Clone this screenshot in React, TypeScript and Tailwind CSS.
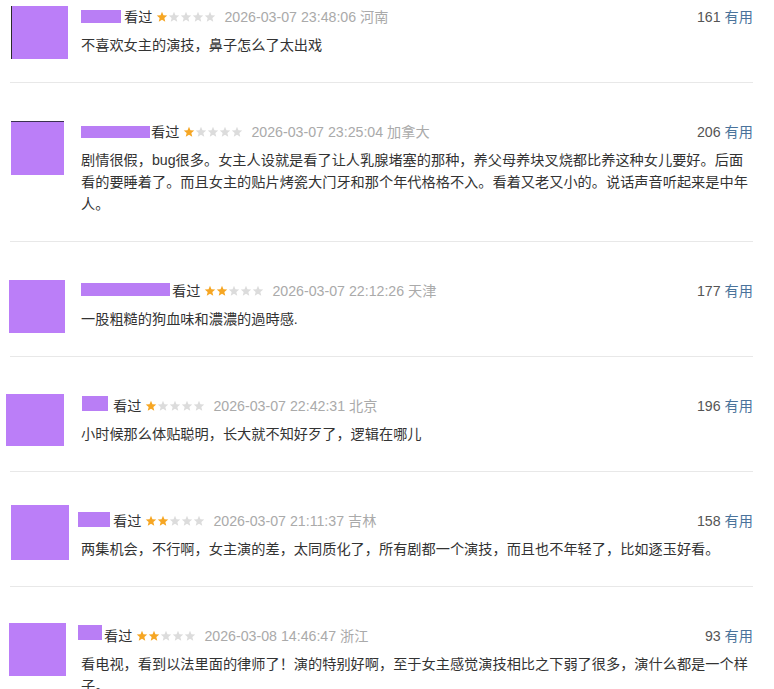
const reviews = [
  {
    avatar: "ml-[1px] mt-0 w-[57px] h-[53px] border-l border-[#2a2a2a]",
    name: "w-[40px] h-[13px] mt-[4px] mr-[3px]",
    stars: 1,
    date: "2026-03-07 23:48:06",
    region: "河南",
    votes: 161,
    text: "不喜欢女主的演技，鼻子怎么了太出戏",
  },
  {
    avatar: "ml-[1px] mt-0 w-[53px] h-[54px] border-t border-[#3a3050]",
    name: "w-[69px] h-[12px] mt-[5px] mr-[1px]",
    stars: 1,
    date: "2026-03-07 23:25:04",
    region: "加拿大",
    votes: 206,
    text: "剧情很假，bug很多。女主人设就是看了让人乳腺堵塞的那种，养父母养块叉烧都比养这种女儿要好。后面看的要睡着了。而且女主的贴片烤瓷大门牙和那个年代格格不入。看着又老又小的。说话声音听起来是中年人。",
  },
  {
    avatar: "ml-[-1px] mt-0 w-[56px] h-[53px]",
    name: "w-[89px] h-[13px] mt-[3px] mr-[2px]",
    stars: 2,
    date: "2026-03-07 22:12:26",
    region: "天津",
    votes: 177,
    text: "一股粗糙的狗血味和濃濃的過時感.",
  },
  {
    avatar: "ml-[-4px] mt-[-1px] w-[58px] h-[52px]",
    name: "w-[26px] h-[15px] mt-[1px] mr-[5px] ml-[1px]",
    stars: 1,
    date: "2026-03-07 22:42:31",
    region: "北京",
    votes: 196,
    text: "小时候那么体贴聪明，长大就不知好歹了，逻辑在哪儿",
  },
  {
    avatar: "ml-[1px] mt-[-5px] w-[58px] h-[55px]",
    name: "w-[32px] h-[15px] mt-[2px] mr-[3px] ml-[-3px]",
    stars: 2,
    date: "2026-03-07 21:11:37",
    region: "吉林",
    votes: 158,
    text: "两集机会，不行啊，女主演的差，太同质化了，所有剧都一个演技，而且也不年轻了，比如逐玉好看。",
  },
  {
    avatar: "ml-[-1px] mt-[-2px] w-[57px] h-[53px]",
    name: "w-[24px] h-[15px] mt-0 mr-[2px] ml-[-3px]",
    stars: 2,
    date: "2026-03-08 14:46:47",
    region: "浙江",
    votes: 93,
    text: "看电视，看到以法里面的律师了！演的特别好啊，至于女主感觉演技相比之下弱了很多，演什么都是一个样子。",
  },
];

function Stars({ count }: { count: number }) {
  return (
    <span className="flex items-center mx-[4px]">
      {[0, 1, 2, 3, 4].map(i => (
        <svg key={i} width="12" height="12" viewBox="0 0 24 24" className="shrink-0">
          <polygon
            points="12,1.5 14.9,8.6 22.5,9.2 16.7,14.1 18.5,21.6 12,17.6 5.5,21.6 7.3,14.1 1.5,9.2 9.1,8.6"
            fill={i < count ? "#f6a623" : "#dcdcdc"}
          />
        </svg>
      ))}
    </span>
  );
}

export default function App() {
  return (
    <div className="w-[774px] h-[689px] overflow-hidden bg-white pt-[6px] pl-[10px] pr-[21px] font-['Liberation_Sans','Noto_Sans_CJK_SC',sans-serif] text-[14.2px] text-[#333]">
      {reviews.map((r, idx) => (
        <div key={idx} className={idx > 0 ? "pt-[38px] border-b border-[#e8e8e8]" : "border-b border-[#e8e8e8]"}>
          <div className="flex items-start">
            <div className="w-[71px] shrink-0">
              <div className={`${r.avatar} bg-[#bb7ef8]`} />
            </div>
            <div className="flex-1 min-w-0 pb-[26px]">
              <div className="flex items-center justify-between h-[22px] leading-[22px]">
                <div className="flex items-center whitespace-nowrap">
                  <span className={`${r.name} self-start bg-[#b97ef5] shrink-0`} />
                  <span className="text-[#333]">看过</span>
                  <Stars count={r.stars} />
                  <span className="ml-[4px] text-[#aaa]">
                    {r.date} {r.region}
                  </span>
                </div>
                <div className="whitespace-nowrap">
                  <span className="text-[#555]">{r.votes}</span>{" "}
                  <span className="text-[#4a739b]">有用</span>
                </div>
              </div>
              <p className="mt-[6px] leading-[22px] text-[#333] break-all">{r.text}</p>
            </div>
          </div>
        </div>
      ))}
    </div>
  );
}
